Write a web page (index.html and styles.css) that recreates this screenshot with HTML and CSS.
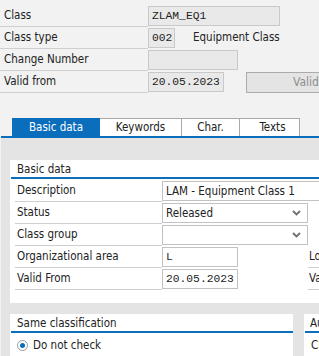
FILE: index.html
```html
<!DOCTYPE html>
<html>
<head>
<meta charset="utf-8">
<link rel="stylesheet" href="styles.css">
</head>
<body>
<div class="page">
  <div class="top">
    <div class="row">
      <div class="lbl">Class</div>
      <div class="field ro mono w-class">ZLAM_EQ1</div>
    </div>
    <div class="row">
      <div class="lbl">Class type</div>
      <div class="field ro mono w-type">002</div>
      <span class="desc">Equipment Class</span>
    </div>
    <div class="row">
      <div class="lbl">Change Number</div>
      <div class="field ro w-change"></div>
    </div>
    <div class="row">
      <div class="lbl">Valid from</div>
      <div class="field ro mono w-date">20.05.2023</div>
      <div class="btn">Validity</div>
    </div>
  </div>

  <div class="tabs">
    <div class="tab active t-basic">Basic data</div>
    <div class="tab t-key">Keywords</div>
    <div class="tab t-char">Char.</div>
    <div class="tab t-text">Texts</div>
  </div>

  <div class="area">
    <div class="panel main">
      <div class="phead">Basic data</div>
      <div class="frow">
        <div class="flbl">Description</div>
        <div class="inp w-desc">LAM - Equipment Class 1</div>
      </div>
      <div class="frow">
        <div class="flbl">Status</div>
        <div class="inp sel w-sel">Released
          <svg class="chev" width="9" height="6" viewBox="0 0 9 6"><polyline points="1,1 4.5,4.5 8,1" fill="none" stroke="#6f6f6f" stroke-width="1.8"/></svg>
        </div>
      </div>
      <div class="frow">
        <div class="flbl">Class group</div>
        <div class="inp sel w-sel">
          <svg class="chev" width="9" height="6" viewBox="0 0 9 6"><polyline points="1,1 4.5,4.5 8,1" fill="none" stroke="#6f6f6f" stroke-width="1.8"/></svg>
        </div>
      </div>
      <div class="frow">
        <div class="flbl">Organizational area</div>
        <div class="inp mono w-org">L</div>
        <div class="flbl2">Local dependencies</div>
      </div>
      <div class="frow">
        <div class="flbl">Valid From</div>
        <div class="inp mono w-org">20.05.2023</div>
        <div class="flbl2">Valid To</div>
      </div>
    </div>

    <div class="lower">
      <div class="panel same">
        <div class="phead">Same classification</div>
        <div class="radio-row">
          <span class="radio"><span class="dot"></span></span>
          <span>Do not check</span>
        </div>
      </div>
      <div class="panel auth">
        <div class="phead">Authorizations</div>
        <div class="radio-row plain">Classification</div>
      </div>
    </div>
  </div>
</div>
</body>
</html>
```

FILE: styles.css
```css
html, body {
  margin: 0;
  padding: 0;
}
body {
  background: #f2f2f2;
  font-family: "DejaVu Sans Condensed", "DejaVu Sans", sans-serif;
  font-size: 11.5px;
  color: #222;
  overflow: hidden;
  width: 319px;
  height: 356px;
}
.page {
  width: 319px;
  height: 356px;
  overflow: hidden;
}
.mono {
  font-family: "Liberation Mono", "Courier New", monospace;
  font-size: 11.3px;
}

/* header rows */
.top {
  padding-top: 5px;
}
.row {
  display: flex;
  align-items: flex-start;
  height: 22px;
  white-space: nowrap;
}
.lbl {
  width: 148px;
  flex: none;
  box-sizing: border-box;
  height: 22px;
  line-height: 21px;
  padding-left: 4px;
  border-bottom: 1px solid #cfcfcf;
}
.field {
  flex: none;
  box-sizing: border-box;
  height: 20px;
  margin-top: 1px;
  line-height: 18px;
  padding-left: 3px;
  border: 1px solid #c9c9c9;
  background: #e9e9e9;
  color: #222;
}
.w-class { width: 132px; }
.w-type { width: 27px; }
.w-change { width: 90px; }
.w-date { width: 76px; }
.desc {
  margin-left: 18px;
  line-height: 21px;
  color: #222;
}
.btn {
  flex: none;
  box-sizing: border-box;
  margin-left: 22px;
  margin-top: 1px;
  height: 21px;
  width: 110px;
  padding-left: 46px;
  line-height: 19px;
  border: 1px solid #ababab;
  background: #e4e4e4;
  color: #8e8e8e;
  font-size: 12px;
}

/* tabs */
.tabs {
  display: flex;
  margin-top: 25px;
  margin-left: 1px;
  padding-left: 11px;
  border-bottom: 2px solid #0a6ebd;
  height: 18px;
}
.tab {
  box-sizing: border-box;
  height: 18px;
  line-height: 17px;
  text-align: center;
  background: #fff;
  border-top: 1px solid #a9a9a9;
  border-right: 1px solid #a9a9a9;
  font-size: 11.5px;
  color: #222;
}
.tab.active {
  background: #0a6ebd;
  color: #fff;
  border: none;
  line-height: 18px;
}
.t-basic { width: 88px; }
.t-key { width: 82px; }
.t-char { width: 58px; }
.t-text { width: 60px; padding-left: 6px; }

/* content area */
.area {
  margin-left: 1px;
  background: #e4e4e4;
  padding: 22px 0 0 9px;
  height: 240px;
}
.panel {
  background: #fff;
}
.main {
  width: 330px;
  padding-bottom: 13px;
  margin-bottom: 11px;
}
.phead {
  height: 17px;
  line-height: 18px;
  margin-left: 1px;
  padding-left: 6px;
  border-bottom: 2px solid #0a6ebd;
  white-space: nowrap;
  overflow: hidden;
  font-size: 11.5px;
}
.main .phead {
  margin-bottom: 1px;
}
.frow {
  display: flex;
  align-items: flex-start;
  height: 22px;
  padding-left: 5px;
  white-space: nowrap;
}
.flbl {
  flex: none;
  width: 147px;
  box-sizing: border-box;
  height: 22px;
  line-height: 21px;
  padding-left: 2px;
  border-bottom: 1px solid #cfcfcf;
}
.flbl2 {
  flex: none;
  width: 100px;
  box-sizing: border-box;
  height: 22px;
  line-height: 21px;
  margin-left: 70px;
  padding-left: 1px;
  border-bottom: 1px solid #cfcfcf;
}
.inp {
  flex: none;
  position: relative;
  box-sizing: border-box;
  height: 20px;
  margin-top: 1px;
  line-height: 18px;
  padding-left: 3px;
  border: 1px solid #c2c2c2;
  background: #fff;
}
.w-desc { width: 170px; }
.w-sel { width: 146px; }
.w-org { width: 76px; }
.chev {
  position: absolute;
  right: 6px;
  top: 6px;
}

/* lower panels */
.lower {
  display: flex;
  gap: 11px;
}
.same {
  width: 283px;
  flex: none;
  height: 60px;
}
.auth {
  width: 100px;
  flex: none;
  height: 60px;
}
.auth .phead {
  padding-left: 5px;
}
.radio-row {
  display: flex;
  align-items: center;
  gap: 5px;
  padding-left: 7px;
  height: 24px;
  white-space: nowrap;
}
.radio-row.plain {
  padding-left: 7px;
}
.radio {
  width: 11px;
  height: 11px;
  box-sizing: border-box;
  border: 1px solid #9a9a9a;
  border-radius: 50%;
  display: flex;
  align-items: center;
  justify-content: center;
  background: #fff;
}
.dot {
  width: 5px;
  height: 5px;
  border-radius: 50%;
  background: #0a6ebd;
}
```
